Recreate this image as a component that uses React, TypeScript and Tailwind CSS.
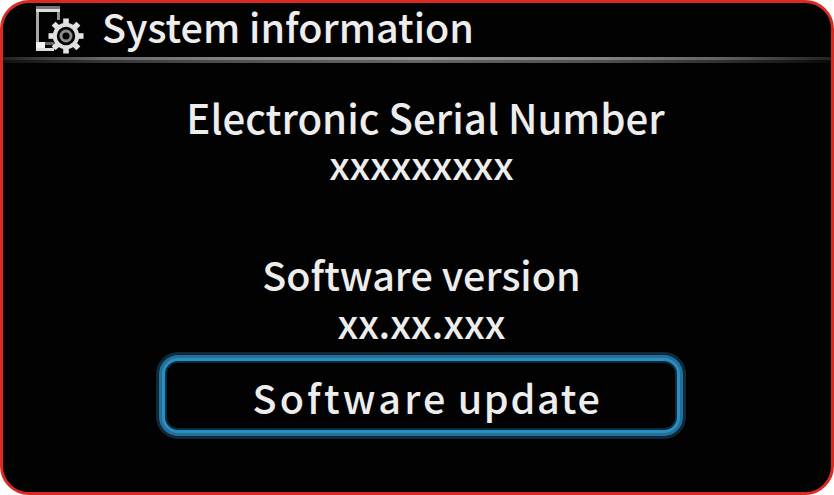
function SettingsIcon() {
  const teeth = [0, 45, 90, 135, 180, 225, 270, 315];
  return (
    <svg className="block h-[48px] w-[50px] shrink-0" viewBox="0 0 50 48" fill="none">
      <path d="M1.5 42V1.5" stroke="#a9a9a9" strokeWidth="3" />
      <path d="M0 1.5H24" stroke="#777" strokeWidth="3" />
      <path d="M0 4.5H24" stroke="#dcdcdc" strokeWidth="3" />
      <path d="M22.5 6V14" stroke="#8f8f8f" strokeWidth="3" />
      <path d="M0 36H9V42H18V45H0Z" fill="#dedede" />
      <path d="M0 36H9V42H0Z" fill="#f4f4f4" />
      <path d="M9 37.5H18" stroke="#666" strokeWidth="3" />
      <g transform="translate(30 30)">
        <circle r="14" fill="#020202" />
        {teeth.map((angle) => (
          <rect key={angle} x="-2.8" y="-17.5" width="5.6" height="7" fill="#e4e4e4" transform={`rotate(${angle})`} />
        ))}
        <circle r="11.2" stroke="#dedede" strokeWidth="4" />
        <circle r="5" stroke="#8c8c8c" strokeWidth="3" />
      </g>
    </svg>
  );
}

export default function App() {
  return (
    <div className="h-[495px] w-[834px] bg-white font-['Noto_Sans_CJK_JP','Noto_Sans',sans-serif] font-medium text-[#ededed]">
      <div className="flex h-full w-full flex-col rounded-[29px] border-[3px] border-[#d92b20] bg-[#020202]">
        <header className="flex h-[54px] shrink-0 items-start pl-[33px]">
          <div className="pt-[3px]"><SettingsIcon /></div>
          <h1 className="ml-[16px] whitespace-nowrap text-[39.5px] leading-[46px] font-medium">System information</h1>
        </header>
        <div className="h-[3px] shrink-0 bg-[linear-gradient(to_right,#222,#6c696c_12%,#858285_28%,#989598_50%,#858285_72%,#636163_87%,#222)]" />
        <div className="h-[3px] shrink-0 bg-[linear-gradient(to_right,#111,#363536_12%,#505052_28%,#666467_50%,#505052_72%,#303030_87%,#0a0a0a)]" />
        <main className="flex flex-col items-center pt-[31px] pl-[9px] text-[39.5px] leading-[46px] whitespace-nowrap">
          <section className="flex flex-col items-center">
            <h2 className="pl-[8px] text-[40.2px] font-medium">Electronic Serial Number</h2>
            <p className="text-[39px]">xxxxxxxxx</p>
          </section>
          <section className="mt-[65px] flex flex-col items-center gap-[2px]">
            <h2 className="font-medium">Software version</h2>
            <p>xx.xx.xxx</p>
          </section>
          <button className="mt-[7px] mr-[2px] flex h-[87px] w-[530px] items-center justify-center rounded-[22px] border-[3px] border-[#10293a] pt-[2px] pl-[13px] font-medium shadow-[inset_0_0_0_3px_#256f97,inset_0_0_0_6px_#278fc4,inset_0_0_0_8px_#0c2a3a]">
            <span className="tracking-[3.2px]">Software </span>
            <span className="ml-[9px] tracking-[1.7px]">update</span>
          </button>
        </main>
      </div>
    </div>
  );
}
